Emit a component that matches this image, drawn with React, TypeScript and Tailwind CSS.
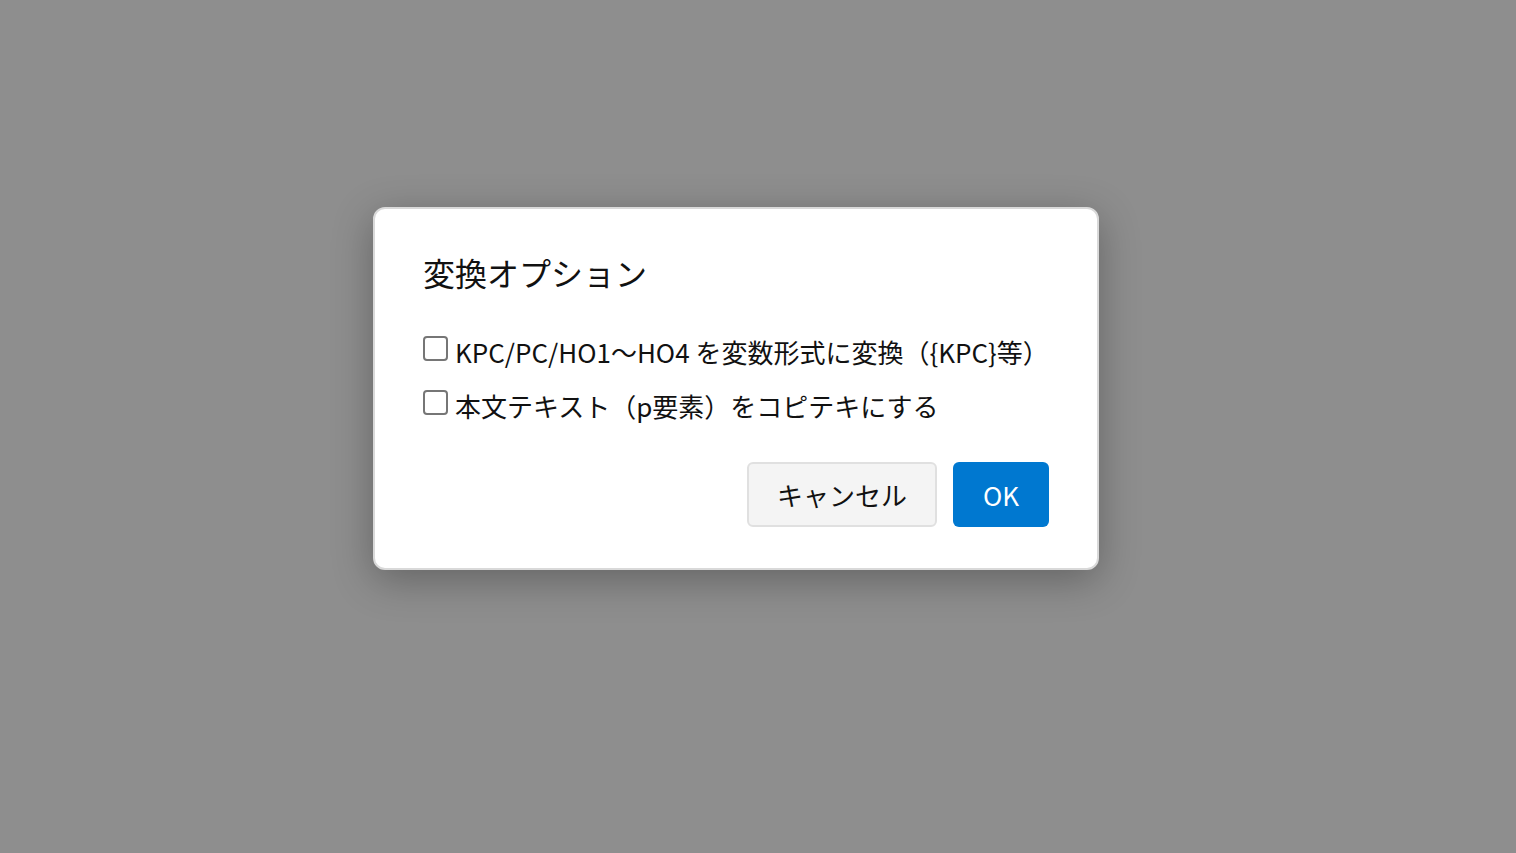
import React from "react";

function Box() {
  return (
    <span className="mt-[2px] inline-block w-[25px] h-[25px] shrink-0 rounded-[4px] border-2 border-[#767676] bg-white" />
  );
}

export default function App() {
  return (
    <div
      className="w-[1516px] h-[853px] bg-[#8e8e8e] pl-[373px] pt-[207px]"
      style={{ fontFamily: '"Noto Sans CJK JP", "Noto Sans", sans-serif' }}
    >
      <div className="w-[726px] rounded-[12px] border-2 border-[#d9d9d9] bg-white px-[48px] pt-[43px] pb-[41px] text-[#111] shadow-[0_10px_40px_rgba(0,0,0,0.3)]">
        <div className="text-[32px] leading-[40px]">変換オプション</div>
        <div className="mt-[42px] flex flex-col gap-[18px]">
          <label className="flex items-start gap-[7px] text-[26px] leading-[36px]">
            <Box />
            <span>KPC/PC/HO1～HO4 を変数形式に変換（{"{KPC}"}等）</span>
          </label>
          <label className="flex items-start gap-[7px] text-[26px] leading-[36px]">
            <Box />
            <span>本文テキスト（p要素）をコピテキにする</span>
          </label>
        </div>
        <div className="mt-[38px] flex justify-end gap-[16px]">
          <button className="h-[65px] w-[190px] rounded-[6px] border-2 border-[#e0e0e0] bg-[#f4f4f4] text-[26px] text-[#111]">
            キャンセル
          </button>
          <button className="h-[65px] w-[96px] rounded-[6px] bg-[#0078d0] text-[26px] text-white">
            OK
          </button>
        </div>
      </div>
    </div>
  );
}
